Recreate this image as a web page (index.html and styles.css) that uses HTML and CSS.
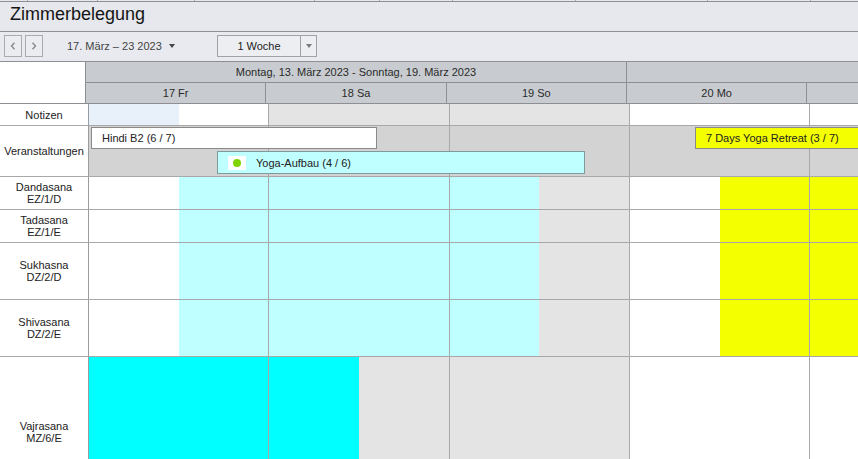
FILE: index.html
```html
<!DOCTYPE html>
<html lang="de">
<head>
<meta charset="utf-8">
<title>Zimmerbelegung</title>
<link rel="stylesheet" href="styles.css">
</head>
<body>
<div class="app">
  <div class="strip">
    <span class="tick" style="width:28px"></span><span class="tick" style="width:70px"></span><span class="tick" style="width:97px"></span><span class="tick" style="width:120px"></span><span class="tick" style="width:65px"></span><span class="tick" style="width:73px"></span><span class="tick" style="width:123px"></span><span class="tick" style="width:132px"></span><span class="tick" style="width:103px"></span>
  </div>
  <div class="titlebar"><h1 class="title">Zimmerbelegung</h1></div>
  <div class="toolbar">
    <button class="navbtn" aria-label="zurück"><svg width="6" height="8" viewBox="0 0 6 8"><polyline points="4.5,0.8 1.5,4 4.5,7.2" fill="none" stroke="#8a8a8a" stroke-width="1.4"/></svg></button>
    <button class="navbtn" aria-label="vor"><svg width="6" height="8" viewBox="0 0 6 8"><polyline points="1.5,0.8 4.5,4 1.5,7.2" fill="none" stroke="#8a8a8a" stroke-width="1.4"/></svg></button>
    <div class="daterange">17. März – 23 2023<span class="caret"></span></div>
    <div class="select">
      <span class="select-value">1 Woche</span>
      <span class="select-arrow"><span class="caret light"></span></span>
    </div>
  </div>
  <div class="cal">
    <div class="cal-head">
      <div class="corner"></div>
      <div class="head-days">
        <div class="week-row">
          <div class="week span3">Montag, 13. März 2023 - Sonntag, 19. März 2023</div>
          <div class="week span2"></div>
        </div>
        <div class="day-row">
          <div class="day">17 Fr</div>
          <div class="day">18 Sa</div>
          <div class="day">19 So</div>
          <div class="day">20 Mo</div>
          <div class="day"></div>
        </div>
      </div>
    </div>
    <div class="cal-body">
      <div class="row r-notes">
        <div class="label">Notizen</div>
        <div class="cells">
          <div class="cell"><span class="half note"></span><span class="half white"></span></div>
          <div class="cell"><span class="half lgray"></span><span class="half lgray"></span></div>
          <div class="cell"><span class="half lgray"></span><span class="half lgray"></span></div>
          <div class="cell"><span class="half white"></span><span class="half white"></span></div>
          <div class="cell"><span class="half white"></span><span class="half white"></span></div>
        </div>
      </div>
      <div class="row r-events">
        <div class="label">Veranstaltungen</div>
        <div class="cells events">
          <div class="cell"></div>
          <div class="cell"></div>
          <div class="cell"></div>
          <div class="cell"></div>
          <div class="cell"></div>
          <div class="event ev-hindi">Hindi B2 (6 / 7)</div>
          <div class="event ev-yoga"><span class="dotbox"><span class="dot"></span></span>Yoga-Aufbau (4 / 6)</div>
          <div class="event ev-retreat">7 Days Yoga Retreat (3 / 7)</div>
        </div>
      </div>
      <div class="row r-small">
        <div class="label">Dandasana<br>EZ/1/D</div>
        <div class="cells">
          <div class="cell"><span class="half white"></span><span class="half lcyan"></span></div>
          <div class="cell"><span class="half lcyan"></span><span class="half lcyan"></span></div>
          <div class="cell"><span class="half lcyan"></span><span class="half lgray"></span></div>
          <div class="cell"><span class="half white"></span><span class="half yellow"></span></div>
          <div class="cell"><span class="half yellow"></span><span class="half yellow"></span></div>
        </div>
      </div>
      <div class="row r-small">
        <div class="label">Tadasana<br>EZ/1/E</div>
        <div class="cells">
          <div class="cell"><span class="half white"></span><span class="half lcyan"></span></div>
          <div class="cell"><span class="half lcyan"></span><span class="half lcyan"></span></div>
          <div class="cell"><span class="half lcyan"></span><span class="half lgray"></span></div>
          <div class="cell"><span class="half white"></span><span class="half yellow"></span></div>
          <div class="cell"><span class="half yellow"></span><span class="half yellow"></span></div>
        </div>
      </div>
      <div class="row r-mid">
        <div class="label">Sukhasna<br>DZ/2/D</div>
        <div class="cells">
          <div class="cell"><span class="half white"></span><span class="half lcyan"></span></div>
          <div class="cell"><span class="half lcyan"></span><span class="half lcyan"></span></div>
          <div class="cell"><span class="half lcyan"></span><span class="half lgray"></span></div>
          <div class="cell"><span class="half white"></span><span class="half yellow"></span></div>
          <div class="cell"><span class="half yellow"></span><span class="half yellow"></span></div>
        </div>
      </div>
      <div class="row r-mid">
        <div class="label">Shivasana<br>DZ/2/E</div>
        <div class="cells">
          <div class="cell"><span class="half white"></span><span class="half lcyan"></span></div>
          <div class="cell"><span class="half lcyan"></span><span class="half lcyan"></span></div>
          <div class="cell"><span class="half lcyan"></span><span class="half lgray"></span></div>
          <div class="cell"><span class="half white"></span><span class="half yellow"></span></div>
          <div class="cell"><span class="half yellow"></span><span class="half yellow"></span></div>
        </div>
      </div>
      <div class="row r-big">
        <div class="label">Vajrasana<br>MZ/6/E</div>
        <div class="cells">
          <div class="cell"><span class="half cyan"></span><span class="half cyan"></span></div>
          <div class="cell"><span class="half cyan"></span><span class="half lgray"></span></div>
          <div class="cell"><span class="half lgray"></span><span class="half lgray"></span></div>
          <div class="cell"><span class="half white"></span><span class="half white"></span></div>
          <div class="cell"><span class="half white"></span><span class="half white"></span></div>
        </div>
      </div>
    </div>
  </div>
</div>
</body>
</html>
```

FILE: styles.css
```css
* { box-sizing: border-box; }
html, body { margin: 0; padding: 0; }
body {
  width: 858px;
  height: 459px;
  overflow: hidden;
  background: #ffffff;
  font-family: "Liberation Sans", Arial, sans-serif;
  font-size: 11px;
  color: #222;
}
.app { width: 858px; height: 459px; overflow: hidden; display: flex; flex-direction: column; }

.strip {
  height: 2px;
  flex: none;
  display: flex;
  background: #e7e8ed;
  border-bottom: 1px solid #8d8f94;
}
.tick { height: 1px; border-right: 1px solid #a6a8ad; flex: none; }

.titlebar {
  flex: none;
  height: 30px;
  background: #e7e8ed;
  border-bottom: 1px solid #8d8f94;
  padding: 0 10px;
}
.title {
  margin: 0;
  font-weight: normal;
  font-size: 18px;
  line-height: 25px;
  color: #151515;
}

.toolbar {
  flex: none;
  height: 30px;
  background: #e8eaef;
  border-bottom: 1px solid #8d8f94;
  display: flex;
  align-items: flex-start;
  padding: 3px 0 0 4px;
}
.navbtn {
  width: 18px;
  height: 22px;
  margin: 0 3px 0 0;
  padding: 0;
  border: 1px solid #a9abb0;
  background: #ebecf0;
  display: flex;
  align-items: center;
  justify-content: center;
}
.daterange {
  margin-left: 21px;
  height: 22px;
  line-height: 22px;
  color: #444;
  display: flex;
  align-items: center;
  width: 150px;
}
.caret {
  display: inline-block;
  width: 0;
  height: 0;
  border-left: 3.5px solid transparent;
  border-right: 3.5px solid transparent;
  border-top: 4px solid #444;
  margin-left: 7px;
}
.caret.light { border-top-color: #7a7c80; margin-left: 0; }
.select {
  width: 100px;
  height: 22px;
  border: 1px solid #a0a2a7;
  background: #eceef2;
  display: flex;
}
.select-value {
  flex: 1;
  text-align: center;
  line-height: 20px;
  color: #222;
}
.select-arrow {
  width: 16px;
  border-left: 1px solid #a0a2a7;
  display: flex;
  align-items: center;
  justify-content: center;
}

.cal { flex: 1; display: flex; flex-direction: column; overflow: hidden; }
.cal-head { display: flex; flex: none; height: 42px; }
.corner {
  width: 86px;
  flex: none;
  background: #fff;
  border-right: 1px solid #8d8f94;
  border-bottom: 1px solid #8d8f94;
}
.head-days { flex: 1; overflow: hidden; background: #c8ccd0; }
.week-row, .day-row { display: flex; height: 21px; }
.week, .day {
  flex: none;
  border-right: 1px solid #8d8f94;
  border-bottom: 1px solid #8d8f94;
  text-align: center;
  line-height: 20px;
  color: #2a2a2a;
  white-space: nowrap;
}
.week.span3 { width: 541px; }
.week.span2 { width: 360.6px; }
.day { width: 180.33px; }

.cal-body { flex: 1; display: flex; flex-direction: column; overflow: hidden; }
.row { display: flex; flex: none; }
.label {
  width: 89px;
  flex: none;
  background: #fff;
  border-right: 1px solid #9a9ca0;
  border-bottom: 1px solid #a8a8a8;
  display: flex;
  align-items: center;
  justify-content: center;
  text-align: center;
  line-height: 12px;
  color: #222;
}
.cells { display: flex; flex: 1; overflow: hidden; }
.cell {
  width: 180.33px;
  flex: none;
  display: flex;
  border-right: 1px solid #a8a8a8;
  border-bottom: 1px solid #a8a8a8;
}
.half { flex: 1; }
.white { background: #ffffff; }
.note { background: #e8f0fa; }
.lgray { background: #e4e4e4; }
.lcyan { background: #bfffff; }
.cyan { background: #00ffff; }
.yellow { background: #f4ff00; }

.r-notes { height: 22px; }
.r-events { height: 51px; }
.r-small { height: 33px; }
.r-mid { height: 57px; }
.r-big { height: 151px; }

.events { position: relative; background: #d3d3d3; }
.event {
  position: absolute;
  height: 22px;
  border: 1px solid #8a8a8a;
  line-height: 20px;
  padding-left: 10px;
  color: #222;
  white-space: nowrap;
  display: flex;
  align-items: center;
}
.ev-hindi { left: 2px; top: 1px; width: 286px; background: #ffffff; }
.ev-yoga { left: 128px; top: 25px; width: 368px; height: 23px; background: #c0ffff; border-color: #7f9a9a; }
.ev-retreat { left: 606px; top: 1px; width: 200px; background: #f4ff00; }
.dotbox {
  width: 18px;
  height: 14px;
  background: #fff;
  display: flex;
  align-items: center;
  justify-content: center;
  margin-right: 10px;
}
.dot { width: 8px; height: 8px; border-radius: 50%; background: #7fd400; }
```
